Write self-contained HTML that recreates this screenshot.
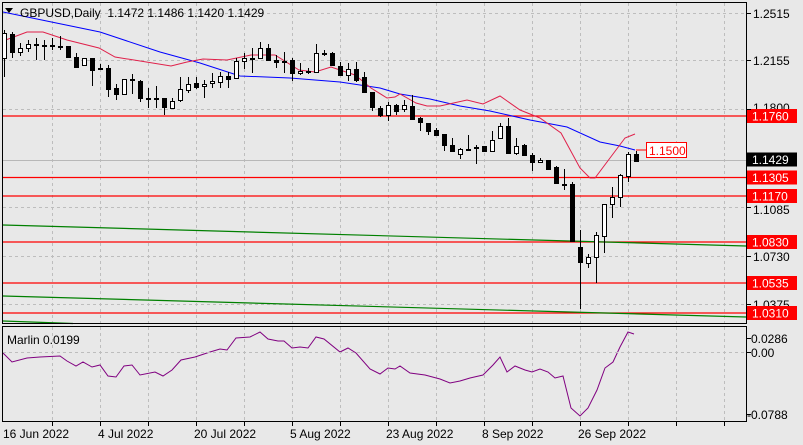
<!DOCTYPE html><html><head><style>
html,body{margin:0;padding:0;background:#e8e8e8;width:803px;height:445px;overflow:hidden}
svg{display:block;font-family:"Liberation Sans","DejaVu Sans",sans-serif}
</style></head><body>
<svg id="s" width="803" height="445" xmlns="http://www.w3.org/2000/svg">
<rect width="803" height="445" fill="#e8e8e8"/>
<g id="grid" stroke="#bdbdbd" stroke-dasharray="3,3" stroke-width="1"></g>
<line x1="3" y1="160.5" x2="746" y2="160.5" stroke="#b8b8b8"/>
<g stroke="#ff0000" stroke-width="1.2">
<line x1="3" y1="116" x2="746" y2="116"/>
<line x1="3" y1="177.5" x2="746" y2="177.5"/>
<line x1="3" y1="196" x2="746" y2="196"/>
<line x1="3" y1="242" x2="746" y2="242"/>
<line x1="3" y1="283" x2="746" y2="283"/>
<line x1="3" y1="313" x2="746" y2="313"/>
</g>
<g stroke="#008000" stroke-width="1.2" fill="none">
<polyline points="3,225 746,246"/>
<polyline points="3,296 746,317"/>
<polyline points="3,321 73,323.5"/>
</g>
<polyline fill="none" stroke="#0000ff" stroke-width="1" points="3,12 100,32 160,52 200,63 240,76 290,78 340,82 380,88 400,94 430,99 460,106 490,111 530,120 567,127 600,142 620,146 635,150"/>
<polyline fill="none" stroke="#e0204a" stroke-width="1" points="3,41 27,32 43,32 67,40 99,48 115,57 171,66 187,62 203,59 227,60 251,55 275,55 299,70 315,72 331,67 355,75 371,88 387,98 395,97 400,94 416,103 427,106 440,106 467,100 483,104 500,96 520,110 540,118 561,133 580,168 590,178 595,178 610,158 625,138 635,134"/>
<g id="cdl"></g>
<polyline fill="none" stroke="#800080" stroke-width="1" points="3,353 12,362 27,358 40,357 60,356 67,361 76,366 83,362 92,367 100,365 108,376 116,377 124,366 132,365 140,375 155,372 163,376 172,370 181,360 195,357 210,352 220,349 227,350 236,338 250,337 260,332 268,339 278,341 284,341 292,348 300,347 308,348 316,337 324,339 340,352 348,348 356,353 370,369 380,374 388,368 395,369 400,366 410,373 425,375 440,379 450,383 460,381 470,378 483,375 493,365 500,357 507,372 515,366 525,370 532,372 540,369 548,372 555,378 563,376 571,408 580,416 588,408 597,390 605,368 613,362 620,347 628,332 634,334"/>
<line x1="3" y1="352.5" x2="746" y2="352.5" stroke="#bdbdbd" stroke-dasharray="3,3"/>
<g fill="none" stroke="#000" stroke-width="1">
<rect x="2.5" y="2.5" width="744" height="321"/>
<rect x="2.5" y="326.5" width="744" height="95"/>
</g>
<path d="M5,8 L13,8 L9,13Z" fill="#000"/>
<text x="20" y="17" font-size="12" fill="#000">GBPUSD,Daily&#160; 1.1472 1.1486 1.1420 1.1429</text>
<text x="7" y="344" font-size="12" fill="#000">Marlin 0.0199</text>
<g font-size="12" fill="#000">
<text x="753" y="18">1.2515</text><text x="753" y="65">1.2155</text>
<text x="753" y="112">1.1800</text><text x="753" y="214">1.1085</text>
<text x="753" y="261">1.0730</text><text x="753" y="309">1.0375</text>
<text x="751" y="343">0.0286</text><text x="751" y="357">0.00</text><text x="747" y="419">-0.0788</text>
</g>
<g font-size="12" fill="#fff">
<rect x="747" y="109" width="50" height="14" fill="#ff0000"/><text x="752" y="120.5">1.1760</text>
<rect x="747" y="170.5" width="50" height="14" fill="#ff0000"/><text x="752" y="182">1.1305</text>
<rect x="747" y="189" width="50" height="14" fill="#ff0000"/><text x="752" y="200.5">1.1170</text>
<rect x="747" y="235" width="50" height="14" fill="#ff0000"/><text x="752" y="246.5">1.0830</text>
<rect x="747" y="276" width="50" height="14" fill="#ff0000"/><text x="752" y="287.5">1.0535</text>
<rect x="747" y="306" width="50" height="14" fill="#ff0000"/><text x="752" y="317.5">1.0310</text>
<rect x="747" y="152.5" width="50" height="14" fill="#000"/><text x="752" y="164">1.1429</text>
</g>
<line x1="636" y1="150" x2="646" y2="150" stroke="#ff0000"/>
<rect x="646.5" y="142.5" width="40" height="15" fill="#fff" stroke="#ff0000"/>
<text x="649" y="155" font-size="12" fill="#ff0000">1.1500</text>
<g font-size="12" fill="#000">
<text x="3" y="438">16 Jun 2022</text><text x="98" y="438">4 Jul 2022</text>
<text x="194" y="438">20 Jul 2022</text><text x="290" y="438">5 Aug 2022</text>
<text x="386" y="438">23 Aug 2022</text><text x="482" y="438">8 Sep 2022</text>
<text x="578" y="438">26 Sep 2022</text>
</g>
<g id="ticks" stroke="#000"></g>
</svg>
<script>
var NS="http://www.w3.org/2000/svg";
function el(p,t,a){var e=document.createElementNS(NS,t);for(var k in a)e.setAttribute(k,a[k]);document.getElementById(p).appendChild(e);}
for(var x=52;x<746;x+=48){el("grid","line",{x1:x+.5,y1:3,x2:x+.5,y2:323});el("grid","line",{x1:x+.5,y1:327,x2:x+.5,y2:421});el("ticks","line",{x1:x+.5,y1:422,x2:x+.5,y2:426});}
[13,60,109,207,256,304].forEach(function(y){el("grid","line",{x1:3,y1:y+.5,x2:746,y2:y+.5});el("ticks","line",{x1:747,y1:y+.5,x2:751,y2:y+.5});});
[338,352,414].forEach(function(y){el("ticks","line",{x1:747,y1:y+.5,x2:751,y2:y+.5});});
var d=[[33,58,'w',30,77],[34,52,'b',32,58],[48,52,'w',43,56],[44,48,'w',40,52],[44,45,'d',38,60],[45,46,'d',40,60],[45,46,'d',38,50],[46,47,'d',36,50],[46,57,'b',46,57],[57,67,'b',53,68],[58,65,'w',58,65],[58,70,'b',58,86],[68,69,'d',64,70],[68,89,'b',65,97],[88,94,'b',84,100],[79,94,'w',79,94],[79,80,'d',74,94],[81,98,'b',80,102],[98,99,'d',88,108],[98,99,'d',86,108],[98,107,'b',98,115],[101,108,'w',98,109],[89,100,'w',77,102],[84,90,'w',77,93],[83,87,'b',77,89],[84,86,'w',80,98],[81,83,'w',73,88],[76,82,'w',72,88],[76,79,'b',72,88],[61,78,'w',58,79],[58,61,'w',53,69],[58,59,'d',48,73],[48,58,'w',42,58],[48,60,'b',44,60],[60,62,'b',55,68],[61,62,'d',52,73],[60,73,'b',58,81],[71,73,'w',63,75],[71,72,'d',68,74],[53,72,'w',44,72],[53,54,'d',50,56],[53,65,'b',52,66],[66,75,'b',62,76],[69,75,'w',63,81],[69,80,'b',62,82],[77,92,'b',72,92],[92,107,'b',92,111],[108,115,'b',106,117],[105,115,'w',102,121],[105,111,'b',104,115],
[105,109,'w',100,112],[106,119,'b',95,120],[118,122,'b',117,131],[123,131,'b',123,135],[130,135,'b',128,136],[134,145,'b',134,151],[145,151,'b',138,151],[149,154,'w',148,159],[149,150,'d',135,151],[147,148,'w',145,164],[146,151,'b',146,152],[140,151,'w',131,151],[126,138,'w',123,138],[126,153,'b',118,153],[146,153,'w',138,155],[145,155,'b',144,156],[155,162,'b',153,171],[160,162,'w',158,163],[160,169,'b',161,170],[167,183,'b',166,184],[184,185,'d',169,190],[184,241,'b',182,241],[247,262,'b',230,309],[257,263,'w',254,268],[235,257,'w',232,283],[204,236,'w',204,253],[197,204,'w',187,218],[175,197,'w',174,207],[154,176,'w',152,182],[154,161,'b',151,161]];
d.forEach(function(c,i){var x=4+8*i;el("cdl","line",{x1:x+.5,y1:c[3],x2:x+.5,y2:c[4],stroke:"#000"});
if(c[2]=='d')el("cdl","rect",{x:x-2,y:c[0],width:5,height:2,fill:"#000"});
else el("cdl","rect",{x:x-1.5,y:c[0]+.5,width:4,height:Math.max(1,c[1]-c[0]),fill:c[2]=='w'?"#fff":"#000",stroke:"#000"});});
</script>
</body></html>
